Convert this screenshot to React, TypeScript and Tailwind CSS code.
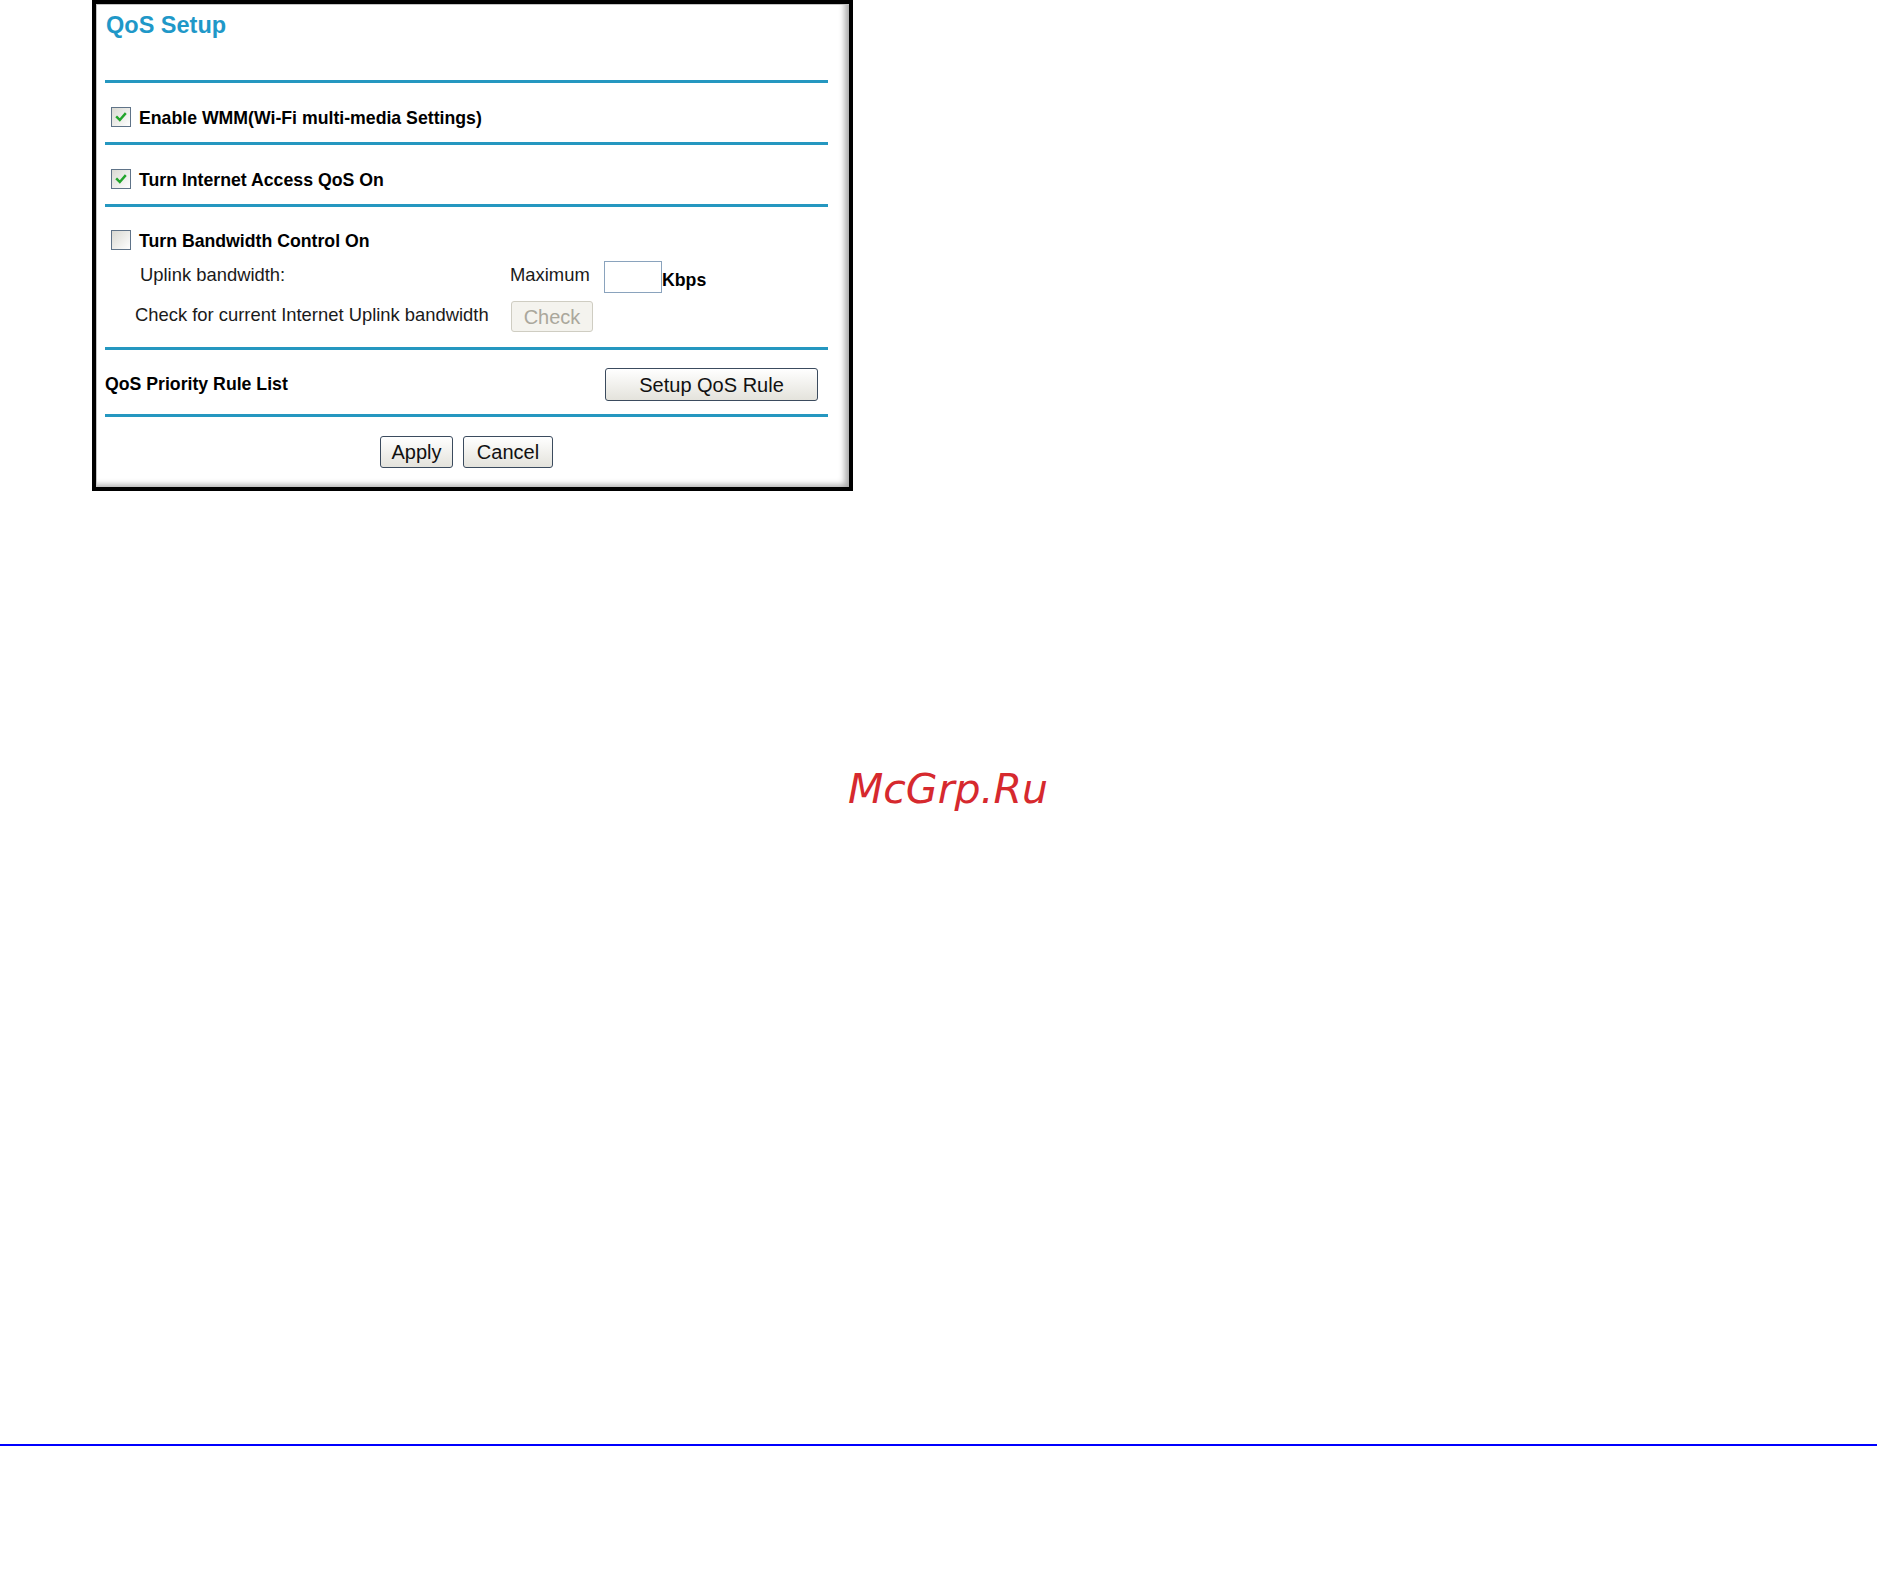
import React from "react";

const sans = { fontFamily: '"Liberation Sans", Arial, sans-serif' };

function Check({ checked }: { checked?: boolean }) {
  return (
    <span className="flex h-[20px] w-[20px] shrink-0 items-center justify-center border border-[#5f7388] bg-linear-to-br from-[#d9d9d2] to-white">
      {checked && (
        <svg width="14" height="14" viewBox="0 0 14 14">
          <path d="M3 7.2 L5.8 10 L11 4" fill="none" stroke="#22a52b" strokeWidth="2.4" strokeLinecap="square" />
        </svg>
      )}
    </span>
  );
}

function Btn({ children, className = "" }: { children: React.ReactNode; className?: string }) {
  return (
    <button
      className={
        "flex items-center justify-center rounded-[3px] border border-[#3b4b5e] bg-linear-to-b from-white to-[#e4e3dc] text-[20px] leading-none text-[#111] " +
        className
      }
    >
      {children}
    </button>
  );
}

const Rule = () => <div className="ml-[9px] h-[3px] w-[723px] bg-[#2597c0]" />;

function CheckRow({ label, checked }: { label: string; checked?: boolean }) {
  return (
    <div className="flex items-start pl-[15px] pt-[24px]">
      <Check checked={checked} />
      <span className="ml-[8px] mt-[1px] text-[17.7px] font-bold leading-[20px] text-black">{label}</span>
    </div>
  );
}

export default function App() {
  return (
    <div className="min-h-[1578px] w-full bg-white" style={sans}>
      <div className="ml-[92px] h-[491px] w-[761px] border-4 border-black bg-white shadow-[inset_1px_1px_0_#c4c4c4,inset_-8px_-6px_6px_-4px_rgba(0,0,0,0.35)]">
        <div className="h-[76px] pl-[10px] pt-[7px]">
          <h1 className="text-[23.5px] font-bold leading-[28px] text-[#1f98c8]">QoS Setup</h1>
        </div>
        <Rule />
        <div className="h-[59px]">
          <CheckRow label="Enable WMM(Wi-Fi multi-media Settings)" checked />
        </div>
        <Rule />
        <div className="h-[59px]">
          <CheckRow label="Turn Internet Access QoS On" checked />
        </div>
        <Rule />
        <div className="h-[140px]">
          <div className="flex items-start pl-[15px] pt-[23px]">
            <Check />
            <span className="ml-[8px] mt-[1px] text-[17.7px] font-bold leading-[20px] text-black">
              Turn Bandwidth Control On
            </span>
          </div>
          <div className="mt-[10px] flex h-[32px] items-start pl-[44px] text-[18.4px] leading-[20px] text-[#1a1a1a]">
            <span className="mt-[4px] w-[370px]">Uplink bandwidth:</span>
            <span className="mt-[4px] w-[94px]">Maximum</span>
            <input className="h-[32px] w-[58px] border border-[#8aa3bd] bg-white outline-none" />
            <span className="mt-[9px] text-[17.7px] font-bold text-black">Kbps</span>
          </div>
          <div className="mt-[8px] flex h-[31px] items-start pl-[39px] text-[18.4px] leading-[20px] text-[#1a1a1a]">
            <span className="mt-[4px] w-[376px]">Check for current Internet Uplink bandwidth</span>
            <button
              disabled
              className="flex h-[31px] w-[82px] items-center justify-center rounded-[3px] border border-[#cfcdc2] bg-[#f4f3ee] text-[20px] leading-none text-[#aaa79c]"
            >
              Check
            </button>
          </div>
        </div>
        <Rule />
        <div className="ml-[9px] flex h-[64px] w-[723px] items-start justify-between">
          <span className="mt-[24px] text-[17.7px] font-bold leading-[20px] text-black">QoS Priority Rule List</span>
          <Btn className="mr-[10px] mt-[18px] h-[33px] w-[213px]">Setup QoS Rule</Btn>
        </div>
        <Rule />
        <div className="ml-[9px] flex w-[723px] justify-center gap-[10px] pt-[19px]">
          <Btn className="h-[32px] w-[73px]">Apply</Btn>
          <Btn className="h-[32px] w-[90px]">Cancel</Btn>
        </div>
      </div>

      <div
        className="mt-[274px] pl-[14px] text-center text-[41px] italic leading-[48px] text-[#d6292e]"
        style={{ fontFamily: '"DejaVu Sans", sans-serif' }}
      >
        McGrp.Ru
      </div>

      <div className="mt-[631px] h-[2px] w-[1877px] bg-[#0000ff]" />
    </div>
  );
}
